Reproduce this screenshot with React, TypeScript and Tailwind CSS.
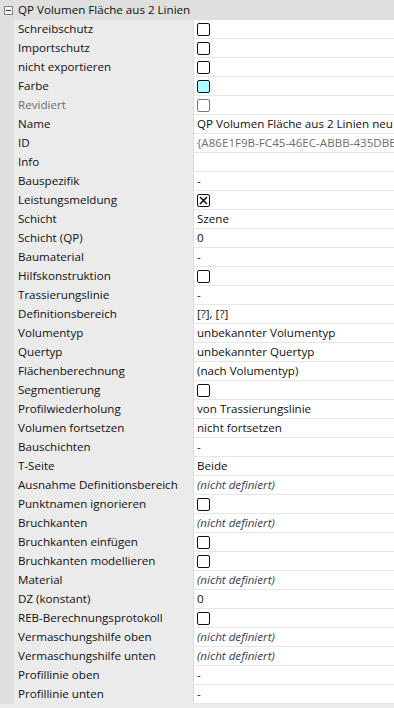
import React from 'react';

type Kind = 'text' | 'check' | 'checked' | 'color' | 'undef' | 'empty';

interface Prop {
  label: string;
  kind: Kind;
  value?: string;
  disabled?: boolean;
  muted?: boolean;
}

const props: Prop[] = [
  { label: 'Schreibschutz', kind: 'check' },
  { label: 'Importschutz', kind: 'check' },
  { label: 'nicht exportieren', kind: 'check' },
  { label: 'Farbe', kind: 'color' },
  { label: 'Revidiert', kind: 'check', disabled: true },
  { label: 'Name', kind: 'text', value: 'QP Volumen Fläche aus 2 Linien neu' },
  { label: 'ID', kind: 'text', value: '{A86E1F9B-FC45-46EC-ABBB-435DBEC7A1F2}', muted: true },
  { label: 'Info', kind: 'empty' },
  { label: 'Bauspezifik', kind: 'text', value: '-' },
  { label: 'Leistungsmeldung', kind: 'checked' },
  { label: 'Schicht', kind: 'text', value: 'Szene' },
  { label: 'Schicht (QP)', kind: 'text', value: '0' },
  { label: 'Baumaterial', kind: 'text', value: '-' },
  { label: 'Hilfskonstruktion', kind: 'check' },
  { label: 'Trassierungslinie', kind: 'text', value: '-' },
  { label: 'Definitionsbereich', kind: 'text', value: '[?], [?]' },
  { label: 'Volumentyp', kind: 'text', value: 'unbekannter Volumentyp' },
  { label: 'Quertyp', kind: 'text', value: 'unbekannter Quertyp' },
  { label: 'Flächenberechnung', kind: 'text', value: '(nach Volumentyp)' },
  { label: 'Segmentierung', kind: 'check' },
  { label: 'Profilwiederholung', kind: 'text', value: 'von Trassierungslinie' },
  { label: 'Volumen fortsetzen', kind: 'text', value: 'nicht fortsetzen' },
  { label: 'Bauschichten', kind: 'text', value: '-' },
  { label: 'T-Seite', kind: 'text', value: 'Beide' },
  { label: 'Ausnahme Definitionsbereich', kind: 'undef' },
  { label: 'Punktnamen ignorieren', kind: 'check' },
  { label: 'Bruchkanten', kind: 'undef' },
  { label: 'Bruchkanten einfügen', kind: 'check' },
  { label: 'Bruchkanten modellieren', kind: 'check' },
  { label: 'Material', kind: 'undef' },
  { label: 'DZ (konstant)', kind: 'text', value: '0' },
  { label: 'REB-Berechnungsprotokoll', kind: 'check' },
  { label: 'Vermaschungshilfe oben', kind: 'undef' },
  { label: 'Vermaschungshilfe unten', kind: 'undef' },
  { label: 'Profillinie oben', kind: 'text', value: '-' },
  { label: 'Profillinie unten', kind: 'text', value: '-' },
];

function Box({ kind, disabled }: { kind: Kind; disabled?: boolean }) {
  const border = disabled ? 'border-[#7a7a7a]' : 'border-[#111]';
  const fill = kind === 'color' ? 'bg-[#aaffff]' : 'bg-white';
  return (
    <span className={`relative block w-[13px] h-[13px] rounded-[2px] border ${border} ${fill}`}>
      {kind === 'checked' && (
        <svg className="absolute inset-0" width="11" height="11" viewBox="0 0 11 11">
          <path d="M2 2 L9 9 M9 2 L2 9" stroke="#111" strokeWidth="1.6" />
        </svg>
      )}
    </span>
  );
}

function Value({ p }: { p: Prop }) {
  if (p.kind === 'check' || p.kind === 'checked' || p.kind === 'color') {
    return <Box kind={p.kind} disabled={p.disabled} />;
  }
  if (p.kind === 'undef') {
    return <span className="italic text-[#3b3b55]">(nicht definiert)</span>;
  }
  if (p.kind === 'empty') return null;
  return <span className={p.muted ? 'text-[#6f6f6f]' : 'text-[#111]'}>{p.value}</span>;
}

export default function App() {
  return (
    <div
      className="w-[394px] h-[708px] overflow-hidden bg-[#ebebeb] text-[11.6px] leading-[18px]"
      style={{ fontFamily: '"Open Sans", "Noto Sans", sans-serif' }}
    >
      <div className="h-[20px] bg-[#dfdfdf] flex items-center pl-[4px]">
        <span className="relative w-[9px] h-[9px] border border-[#808080] bg-[#f4f4f4] mr-[5px]">
          <span className="absolute left-[1px] right-[1px] top-[3px] h-px bg-[#333]" />
        </span>
        <span className="text-[#111] whitespace-nowrap">QP Volumen Fläche aus 2 Linien</span>
      </div>
      <div className="flex">
        <div className="w-[14px] bg-[#dfdfdf] shrink-0" />
        <div className="flex-1 min-w-0">
          {props.map((p, i) => (
            <div key={i} className="flex h-[19px]">
              <div
                className={`w-[179px] shrink-0 pl-[4px] whitespace-nowrap overflow-hidden ${
                  p.disabled ? 'text-[#6d6d6d]' : 'text-[#111]'
                }`}
              >
                {p.label}
              </div>
              <div className="flex-1 min-w-0 bg-white border-l border-[#dcdcdc] border-b border-b-[#e6e6e6] pl-[3px] flex items-center whitespace-nowrap overflow-hidden">
                <Value p={p} />
              </div>
            </div>
          ))}
        </div>
      </div>
    </div>
  );
}
